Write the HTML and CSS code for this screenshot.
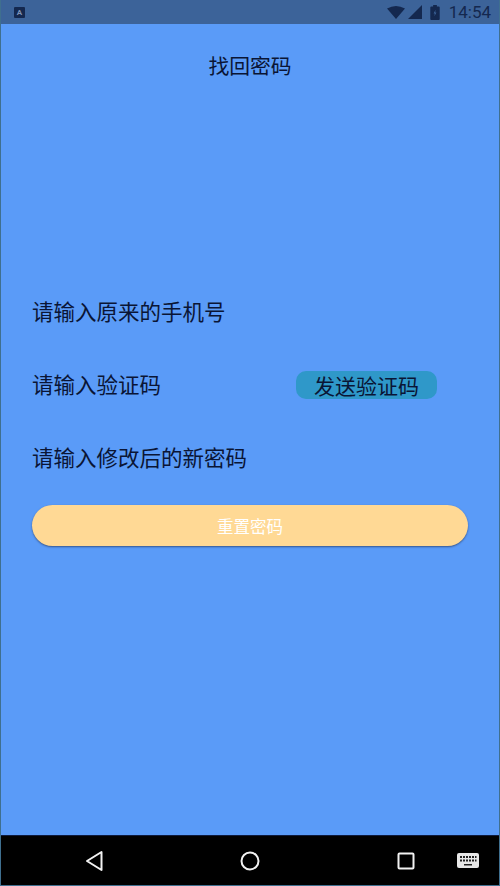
FILE: index.html
```html
<!DOCTYPE html>
<html lang="zh-CN">
<head>
    <meta charset="UTF-8">
    <meta name="viewport" content="width=device-width, initial-scale=1.0">
    <title>找回密码</title>
    <link rel="stylesheet" href="styles.css">
</head>
<body>
    <div class="phone">
        <div class="status-bar">
            <span class="app-badge">A</span>
            <div class="status-right">
                <svg class="icon-wifi" width="18" height="13" viewBox="0 0 18 13"><path d="M0 2.500 Q9 -2.500 18 2.500 L9 13 Z" fill="#14284f"/></svg>
                <svg class="icon-signal" width="14" height="14" viewBox="0 0 14 14"><path d="M14 0 V14 H0 Z" fill="#14284f"/></svg>
                <svg class="icon-battery" width="10" height="15" viewBox="0 0 10 16"><path d="M3 0 H7 V1.500 H9 Q10 1.500 10 2.500 V15 Q10 16 9 16 H1 Q0 16 0 15 V2.500 Q0 1.500 1 1.500 H3 Z" fill="#14284f"/><path d="M5.600 5 L3.500 9 H4.800 L4.400 12 L6.500 8 H5.200 Z" fill="#3c6399"/></svg>
                <span class="clock">14:54</span>
            </div>
        </div>

        <div class="content">
            <h1 class="title">找回密码</h1>
            <div class="form">
                <div class="form-row">请输入原来的手机号</div>
                <div class="form-row">
                    <span>请输入验证码</span>
                    <button class="send-code">发送验证码</button>
                </div>
                <div class="form-row">请输入修改后的新密码</div>
                <button class="reset-btn">重置密码</button>
            </div>
        </div>

        <div class="nav-bar">
            <svg class="nav-back" width="20" height="22" viewBox="0 0 20 22"><path d="M16.500 2 V20 L2 11 Z" fill="none" stroke="#f2f2f2" stroke-width="2" stroke-linejoin="round"/></svg>
            <svg class="nav-home" width="20" height="20" viewBox="0 0 20 20"><circle cx="10" cy="10" r="8.500" fill="none" stroke="#f2f2f2" stroke-width="2"/></svg>
            <svg class="nav-recent" width="18" height="18" viewBox="0 0 18 18"><rect x="1.500" y="1.500" width="15" height="15" rx="1" fill="none" stroke="#f2f2f2" stroke-width="2"/></svg>
            <svg class="nav-keyboard" width="22" height="15" viewBox="0 0 22 15">
                <rect width="22" height="15" rx="2" fill="#e8e8e8"/>
                <path d="M3 3 h2 v2 h-2 z M6 3 h2 v2 h-2 z M9 3 h2 v2 h-2 z M12 3 h2 v2 h-2 z M15 3 h2 v2 h-2 z M18 3 h1.500 v2 h-1.500 z M3 6.500 h2 v2 h-2 z M6 6.500 h2 v2 h-2 z M9 6.500 h2 v2 h-2 z M12 6.500 h2 v2 h-2 z M15 6.500 h2 v2 h-2 z M18 6.500 h1.500 v2 h-1.500 z M7 11 h8 v1.500 h-8 z" fill="#222"/>
            </svg>
        </div>
    </div>
</body>
</html>
```

FILE: styles.css
```css
html, body {
    margin: 0;
    padding: 0;
}
body {
    font-family: "Noto Sans CJK SC", "Roboto", sans-serif;
    background-color: #3f6f8f;
}
.phone {
    width: 498px;
    height: 885px;
    margin: 0 1px;
    display: flex;
    flex-direction: column;
    background-color: #5a9bf8;
}
.status-bar {
    height: 24px;
    flex-shrink: 0;
    background-color: #3c6399;
    display: flex;
    align-items: center;
    justify-content: space-between;
    padding: 0 8px 0 13px;
}
.app-badge {
    width: 11px;
    height: 11px;
    border-radius: 1px;
    background-color: #14284f;
    color: #7f93b5;
    font-family: "Roboto", sans-serif;
    font-size: 8px;
    font-weight: 700;
    line-height: 11px;
    text-align: center;
}
.status-right {
    display: flex;
    align-items: center;
}
.icon-signal {
    margin-left: 3px;
}
.icon-battery {
    margin-left: 8px;
}
.clock {
    margin-left: 9px;
    font-family: "Roboto", sans-serif;
    font-size: 17px;
    color: #14284f;
}
.content {
    flex: 1;
    display: flex;
    flex-direction: column;
}
.title {
    margin: 0;
    padding-top: 26px;
    font-size: 20.800px;
    font-weight: 400;
    line-height: 30px;
    text-align: center;
    color: #0a1535;
}
.form {
    margin-top: 194px;
    padding: 0 31px;
    display: flex;
    flex-direction: column;
}
.form-row {
    height: 73px;
    display: flex;
    align-items: center;
    justify-content: space-between;
    font-size: 21.500px;
    color: #0a1535;
}
.send-code {
    width: 141px;
    height: 28px;
    margin-top: 2px;
    margin-right: 31px;
    padding: 0;
    border: none;
    border-radius: 10px;
    background-color: #2f98c9;
    color: #0a1535;
    font-family: inherit;
    font-size: 21px;
    line-height: 28px;
}
.reset-btn {
    width: 436px;
    height: 41px;
    margin-top: 12px;
    padding: 0;
    border: none;
    border-radius: 21px;
    background-color: #ffd995;
    color: #fff;
    font-family: inherit;
    font-size: 16.500px;
    box-shadow: 0 1px 2px rgba(30, 40, 70, 0.6);
}
.nav-bar {
    height: 50px;
    flex-shrink: 0;
    background-color: #000;
    border-top: 1px solid #0d1a3d;
    box-sizing: border-box;
    display: flex;
    align-items: center;
    padding-left: 84px;
}
.nav-home {
    margin-left: 135px;
}
.nav-recent {
    margin-left: 137px;
}
.nav-keyboard {
    margin-left: 42px;
}
```
